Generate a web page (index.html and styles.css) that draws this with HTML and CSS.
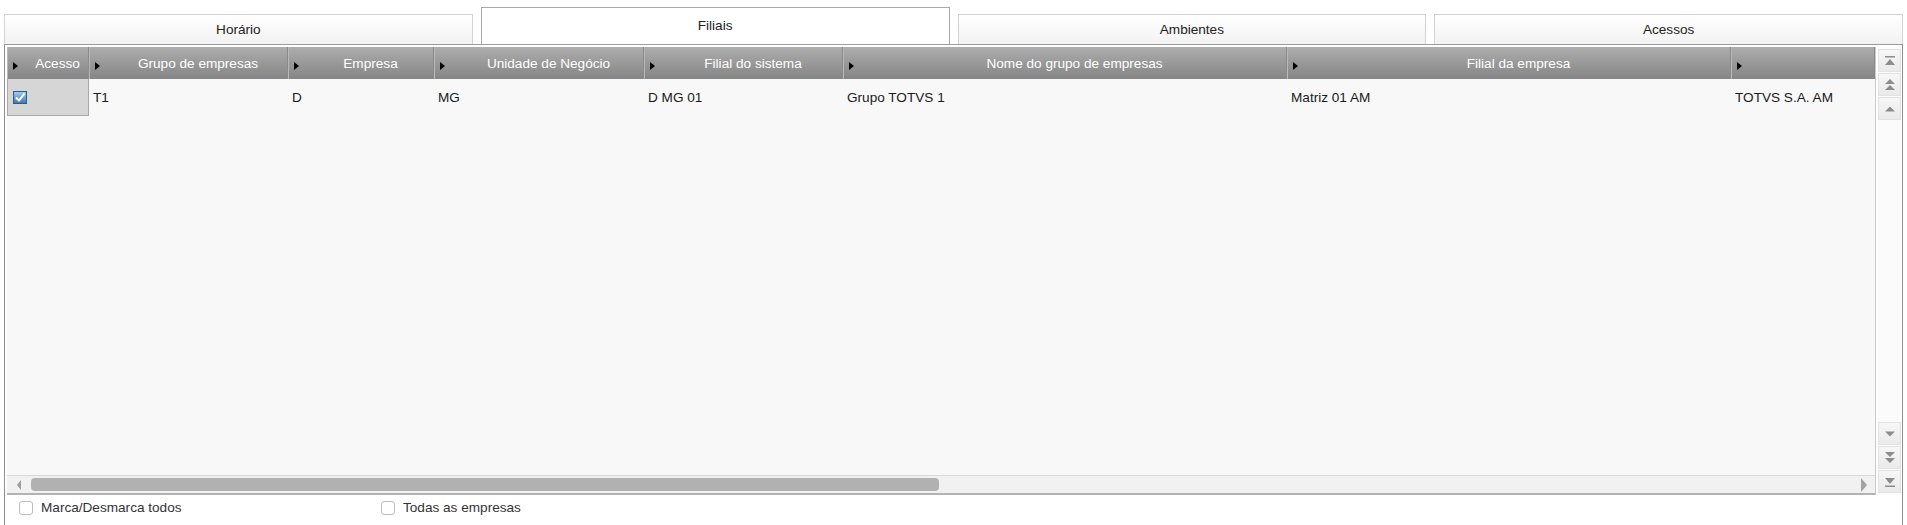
FILE: index.html
```html
<!DOCTYPE html>
<html lang="pt-BR">
<head>
    <meta charset="UTF-8">
    <meta name="viewport" content="width=device-width, initial-scale=1.0">
    <title>Filiais</title>
    <link rel="stylesheet" href="styles.css">
</head>
<body>
    <div class="tabs">
        <div class="tab">Horário</div>
        <div class="tab active">Filiais</div>
        <div class="tab">Ambientes</div>
        <div class="tab">Acessos</div>
    </div>

    <div class="panel">
        <div class="grid-wrap">
            <div class="table">
                <div class="thead">
                    <div class="th"><i class="sort"></i><span>Acesso</span></div>
                    <div class="th"><i class="sort"></i><span>Grupo de empresas</span></div>
                    <div class="th"><i class="sort"></i><span>Empresa</span></div>
                    <div class="th"><i class="sort"></i><span>Unidade de Negócio</span></div>
                    <div class="th"><i class="sort"></i><span>Filial do sistema</span></div>
                    <div class="th"><i class="sort"></i><span>Nome do grupo de empresas</span></div>
                    <div class="th"><i class="sort"></i><span>Filial da empresa</span></div>
                    <div class="th"><i class="sort"></i><span></span></div>
                </div>
                <div class="row">
                    <div class="td td-check">
                        <svg width="14" height="13" viewBox="0 0 14 13">
                            <defs>
                                <linearGradient id="chk" x1="0" y1="0" x2="0" y2="1">
                                    <stop offset="0" stop-color="#a9cdef"/>
                                    <stop offset="1" stop-color="#3b74ad"/>
                                </linearGradient>
                            </defs>
                            <rect x="0.5" y="0.5" width="13" height="12" fill="url(#chk)" stroke="#2d5d8f"/>
                            <path d="M3 6.5 L6 9.5 L11.5 2.5" fill="none" stroke="#fff" stroke-width="2"/>
                        </svg>
                    </div>
                    <div class="td">T1</div>
                    <div class="td">D</div>
                    <div class="td">MG</div>
                    <div class="td">D MG 01</div>
                    <div class="td">Grupo TOTVS 1</div>
                    <div class="td">Matriz 01 AM</div>
                    <div class="td">TOTVS S.A. AM</div>
                </div>
            </div>

            <div class="vscroll">
                <div class="vbtns">
                    <div class="vbtn">
                        <svg width="12" height="12" viewBox="0 0 12 12"><rect x="1" y="1" width="10" height="1.5" fill="#8c8c8c"/><path d="M1 10 L11 10 L6 4 Z" fill="#8c8c8c"/></svg>
                    </div>
                    <div class="vbtn">
                        <svg width="12" height="13" viewBox="0 0 12 13"><path d="M1 6 L11 6 L6 1 Z M1 12 L11 12 L6 7 Z" fill="#8c8c8c"/></svg>
                    </div>
                    <div class="vbtn">
                        <svg width="12" height="12" viewBox="0 0 12 12"><path d="M1 8.5 L11 8.5 L6 3.5 Z" fill="#8c8c8c"/></svg>
                    </div>
                </div>
                <div class="vbtns">
                    <div class="vbtn">
                        <svg width="12" height="12" viewBox="0 0 12 12"><path d="M1 3.5 L11 3.5 L6 8.5 Z" fill="#8c8c8c"/></svg>
                    </div>
                    <div class="vbtn">
                        <svg width="12" height="13" viewBox="0 0 12 13"><path d="M1 1 L11 1 L6 6 Z M1 7 L11 7 L6 12 Z" fill="#8c8c8c"/></svg>
                    </div>
                    <div class="vbtn">
                        <svg width="12" height="12" viewBox="0 0 12 12"><path d="M1 2 L11 2 L6 8 Z" fill="#8c8c8c"/><rect x="1" y="9.5" width="10" height="1.5" fill="#8c8c8c"/></svg>
                    </div>
                </div>
            </div>

            <div class="hscroll">
                <i class="arrow-left"></i>
                <div class="thumb"></div>
                <i class="arrow-right"></i>
            </div>
        </div>

        <div class="options">
            <label class="option"><span class="box"></span>Marca/Desmarca todos</label>
            <label class="option"><span class="box"></span>Todas as empresas</label>
        </div>
    </div>
</body>
</html>
```

FILE: styles.css
```css
body {
    margin: 0;
    padding: 0;
    height: 525px;
    overflow: hidden;
    background-color: #fff;
    font-family: "Liberation Sans", Arial, sans-serif;
    font-size: 13.6px;
    color: #1b1b1b;
}

/* tabs */
.tabs {
    display: flex;
    align-items: flex-end;
    gap: 8px;
    height: 44px;
    padding: 0 4px 0 4px;
}
.tab {
    flex: 1;
    height: 29px;
    display: flex;
    justify-content: center;
    align-items: center;
    border: 1px solid #d3d3d3;
    border-bottom: none;
    background: linear-gradient(#ffffff, #f2f2f2);
    color: #222;
}
.tab.active {
    box-sizing: border-box;
    height: 37px;
    padding-bottom: 2px;
    border-color: #a9a9a9;
    background: #fff;
}

/* panel */
.panel {
    height: 490px;
    border-top: 1px solid #9c9c9c;
    border-left: 1px solid #8f8f8f;
    border-right: 1px solid #8f8f8f;
    margin: 0 4px 0 4px;
    padding: 2px 1px 0 2px;
    background-color: #fff;
}
.grid-wrap {
    display: grid;
    grid-template-columns: 1fr 23px;
    grid-template-rows: 428px 20px;
    column-gap: 2px;
}

/* table */
.table {
    background-color: #f8f8f8;
    border-right: 1px solid #c9c9c9;
    overflow: hidden;
}
.thead,
.row {
    display: grid;
    grid-template-columns: 82px 199px 146px 210px 199px 444px 444px 1fr;
}
.thead {
    height: 32px;
    background: linear-gradient(#adadad, #858585);
}
.th {
    display: flex;
    align-items: center;
    padding-left: 6px;
    border-right: 1px solid #8a8a8a;
    box-shadow: inset 1px 0 #b9b9b9;
    color: #fff;
    white-space: nowrap;
}
.th span {
    flex: 1;
    text-align: center;
}
.sort {
    width: 0;
    height: 0;
    margin-top: 5px;
    margin-right: 9px;
    border-top: 4px solid transparent;
    border-bottom: 4px solid transparent;
    border-left: 5px solid #000;
}
.row {
    height: 37px;
}
.td {
    display: flex;
    align-items: center;
    padding-left: 4px;
    white-space: nowrap;
}
.td-check {
    padding-left: 5px;
    background-color: #d6d6d6;
    border: 1px solid #a9a9a9;
    border-top: none;
}

/* scrollbars */
.vscroll {
    grid-row: 1 / 3;
    grid-column: 2;
    display: flex;
    flex-direction: column;
    justify-content: space-between;
    padding: 2px 0;
    background-color: #fbfbfb;
}
.vbtns {
    display: flex;
    flex-direction: column;
    gap: 1px;
}
.vbtn {
    height: 23px;
    display: flex;
    justify-content: center;
    align-items: center;
    background: linear-gradient(#f7f7f7, #eaeaea);
    border: 1px solid #e2e2e2;
    box-sizing: border-box;
}
.hscroll {
    display: flex;
    align-items: center;
    padding: 0 8px 0 10px;
    background-color: #f1f1f1;
    border-top: 1px solid #d5d9d9;
    border-bottom: 2px solid #b3b3b3;
    border-right: 1px solid #c9c9c9;
    box-sizing: border-box;
}
.thumb {
    width: 908px;
    height: 13px;
    margin-left: 10px;
    border-radius: 4px;
    background-color: #b1b1b1;
}
.arrow-left,
.arrow-right {
    width: 0;
    height: 0;
    border-top: 5px solid transparent;
    border-bottom: 5px solid transparent;
}
.arrow-left {
    border-right: 4px solid #9c9c9c;
}
.arrow-right {
    margin-left: auto;
    border-left: 6px solid #a3a3a3;
    border-top-width: 7px;
    border-bottom-width: 7px;
}

/* options */
.options {
    display: flex;
    padding: 5px 0 0 12px;
}
.option {
    display: flex;
    align-items: center;
    width: 362px;
    color: #333;
}
.box {
    width: 12px;
    height: 12px;
    margin-right: 8px;
    border: 1px solid #bdbdbd;
    border-radius: 3px;
    background-color: #fff;
}
```
